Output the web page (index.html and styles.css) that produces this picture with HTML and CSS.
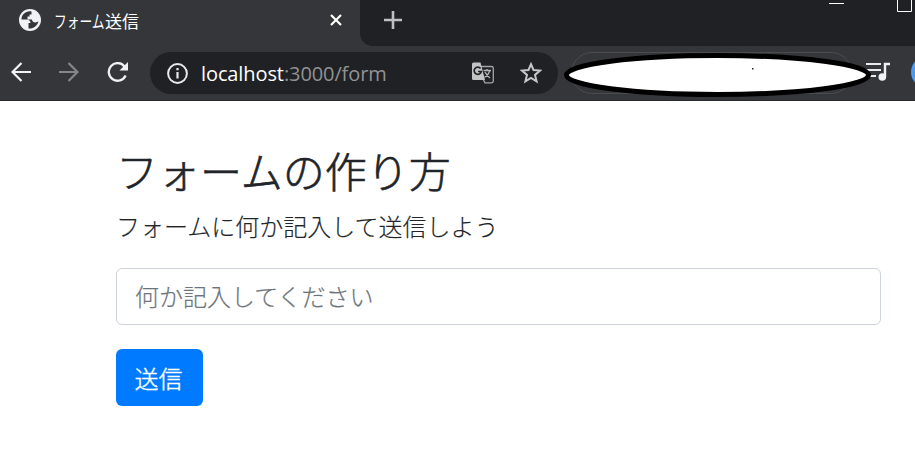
FILE: index.html
```html
<!DOCTYPE html>
<html lang="ja">
<head>
<meta charset="utf-8">
<title>フォーム送信</title>
<link rel="stylesheet" href="styles.css">
</head>
<body>
<header class="browser">
  <div class="tabstrip">
    <div class="tab">
      <svg class="globe" width="22" height="22" viewBox="0 0 22 22"><circle cx="11" cy="11" r="11" fill="#f1f2f4"/><path d="M12.500 2.500C7 1.500 2.500 5.500 2.500 10.500L7.500 10.500C10 10.500 11.500 12 11.500 14H9.500V19.500C14 20 18.500 17 19.400 12.500L16.500 13.500C14 13.500 13 12 13 10.500H8.500V7.500H10.500V5.500H12.500Z" fill="#35363a"/></svg>
      <span class="tab-title"><span class="kana">フォーム</span><span>送信</span></span>
      <svg class="close" width="12" height="12" viewBox="0 0 12 12"><path d="M1 1L11 11M11 1L1 11" stroke="#fff" stroke-width="2.200"/></svg>
    </div>
    <svg class="plus" width="18" height="18" viewBox="0 0 18 18"><path d="M9 0V18M0 9H18" stroke="#bdc1c6" stroke-width="2.600"/></svg>
    <svg class="window-controls" width="90" height="14" viewBox="0 0 90 14"><path d="M4 3.500H19M72.500 -2V11.500H86.500V-2" fill="none" stroke="#fff"/></svg>
  </div>
  <div class="toolbar">
    <svg class="back" width="20" height="20" viewBox="0 0 20 20"><path d="M20 10H1.500M10.500 1L1.500 10L10.500 19" fill="none" stroke="#f1f2f4" stroke-width="2.200"/></svg>
    <svg class="forward" width="20" height="20" viewBox="0 0 20 20"><path d="M0 10H18.500M9.500 1L18.500 10L9.500 19" fill="none" stroke="#85868a" stroke-width="2.200"/></svg>
    <svg class="reload" width="21" height="21" viewBox="0 0 21 21"><path d="M17.500 4.500A8.800 8.800 0 1 0 18.600 13.500" fill="none" stroke="#f1f2f4" stroke-width="2.300"/><path d="M21 0V8.500H12.500Z" fill="#f1f2f4"/></svg>
    <div class="omnibox">
      <svg class="info" width="21" height="21" viewBox="0 0 21 21"><circle cx="10.500" cy="10.500" r="9.400" fill="none" stroke="#e8eaed" stroke-width="2"/><path d="M10.500 5V7.300M10.500 9V15.500" stroke="#e8eaed" stroke-width="2.200"/></svg>
      <span class="url"><span class="host">localhost</span><span class="path">:3000/form</span></span>
      <svg class="translate" width="22" height="22" viewBox="0 0 22 22"><path d="M9 4.500H19.500Q21.300 4.500 21.300 6.300V19Q21.300 20.800 19.500 20.800H13L11 17" fill="none" stroke="#a4a5a7" stroke-width="1.300"/><path d="M1.500 .5H8.500L13 18H1.500Q0 18 0 16.500V2Q0 .5 1.500 .5Z" fill="#c2c3c5"/><path d="M8.600 6.500A3.600 3.600 0 1 0 9.300 9.500H6" fill="none" stroke="#202124" stroke-width="1.700"/><path d="M11.500 8.500H19M15 7V8.500M18 8.500Q16.500 13 12.500 15.500M13 10Q15 14 18 16" fill="none" stroke="#b4b5b7" stroke-width="1.300"/></svg>
      <svg class="star" width="22" height="22" viewBox="0 0 22 22"><path d="M11 2.200L13.500 8L20 8.600L15 12.900L16.600 19.300L11 15.900L5.400 19.300L7 12.900L2 8.600L8.500 8Z" fill="none" stroke="#c6c7c9" stroke-width="2"/></svg>
    </div>
    <div class="extensions">
      <svg class="redaction" width="310" height="46" viewBox="0 0 310 46"><ellipse cx="154.500" cy="23" rx="151" ry="19.500" fill="#fff" stroke="#000" stroke-width="5"/><rect x="189" y="16" width="1.500" height="1.500" fill="#222"/></svg>
    </div>
    <svg class="queue" width="25" height="20" viewBox="0 0 25 20"><path d="M0 2H15M0 8H15M0 14H10" stroke="#e8eaed" stroke-width="2"/><circle cx="16.300" cy="15" r="3.800" fill="#f1f2f4"/><path d="M19 15V2H24" fill="none" stroke="#f1f2f4" stroke-width="2.400"/></svg>
    <div class="avatar"></div>
  </div>
</header>
<main class="page">
  <h1>フォームの作り方</h1>
  <p>フォームに何か記入して送信しよう</p>
  <form>
    <input type="text" placeholder="何か記入してください">
    <button type="button">送信</button>
  </form>
</main>
</body>
</html>
```
FILE: styles.css
```css
* { box-sizing: border-box; }
body {
  margin: 0;
  width: 915px;
  height: 453px;
  overflow: hidden;
  background: #fff;
  color: #212529;
  font-family: "Noto Sans CJK JP Light", "Noto Sans CJK JP", sans-serif;
  font-weight: 300;
}
svg { display: block; flex: none; }
.browser { height: 101px; background: #35363a; border-bottom: 1px solid #28292c; }
.tabstrip { display: flex; height: 46px; background: #202124; }
.tab {
  position: relative;
  display: flex;
  width: 360px;
  padding-left: 19px;
  background: #35363a;
}
.tab::after {
  content: "";
  position: absolute;
  left: 360px;
  bottom: 0;
  width: 12px;
  height: 12px;
  background: radial-gradient(circle at 100% 0, transparent 11.5px, #35363a 12px);
}
.globe { margin-top: 9px; }
.tab-title {
  display: flex;
  width: 276px;
  margin: 7px 0 0 13px;
  color: #fff;
  font-family: "Noto Sans CJK JP", sans-serif;
  font-size: 17px;
  font-weight: 400;
  line-height: 27px;
}
.kana { width: 51px; transform: scaleX(.75); transform-origin: 0 50%; white-space: nowrap; }
.close { margin-top: 14px; }
.plus { margin: 11px 0 0 24px; }
.window-controls { margin-left: auto; }
.toolbar { display: flex; height: 54px; overflow: hidden; }
.toolbar > * { flex: none; }
.back { margin: 16px 0 0 11px; }
.forward { margin: 16px 0 0 28px; }
.reload { margin: 16px 0 0 28px; }
.omnibox {
  display: flex;
  align-items: center;
  width: 408px;
  height: 42px;
  margin: 6px 0 0 22px;
  padding: 0 16px 0 17px;
  border-radius: 21px;
  background: #202124;
}
.url {
  margin: 2px 0 0 13px;
  font-family: "Open Sans", sans-serif;
  font-size: 20px;
  font-weight: 400;
  letter-spacing: -.1px;
  line-height: 28px;
  white-space: nowrap;
}
.host { color: #fff; }
.path { color: #919294; }
.translate { margin-left: auto; }
.star { margin-left: 26px; }
.extensions {
  position: relative;
  width: 281px;
  height: 42px;
  margin: 6px 0 0 13px;
  border: 1px solid #4b4c50;
  border-radius: 21px;
}
.redaction { position: absolute; left: -9px; top: -1px; }
.queue { margin: 16px 0 0 14px; }
.avatar { width: 32px; height: 32px; margin: 10px 0 0 20px; border-radius: 50%; background: #4a9cf0; }
.page { width: 765px; margin: 40px 0 0 116px; }
h1 { margin: 0; font-size: 42px; font-weight: 300; line-height: 58px; -webkit-text-stroke: .6px; }
p { margin: 8px 0 23px; font-size: 24px; line-height: 38px; -webkit-text-stroke: .15px; }
input {
  display: block;
  width: 100%;
  height: 57px;
  padding: 0 18px 2px;
  border: 1px solid #ced4da;
  border-radius: 6px;
  font: inherit;
  font-size: 24px;
}
input::placeholder { color: #6c757d; opacity: 1; -webkit-text-stroke: .2px; }
button {
  display: block;
  width: 87px;
  height: 57px;
  margin-top: 24px;
  padding: 0 2px 1px 0;
  border: 0;
  border-radius: 6px;
  background: #007bff;
  color: #fff;
  font: inherit;
  font-size: 24px;
  -webkit-text-stroke: .4px;
}
```
